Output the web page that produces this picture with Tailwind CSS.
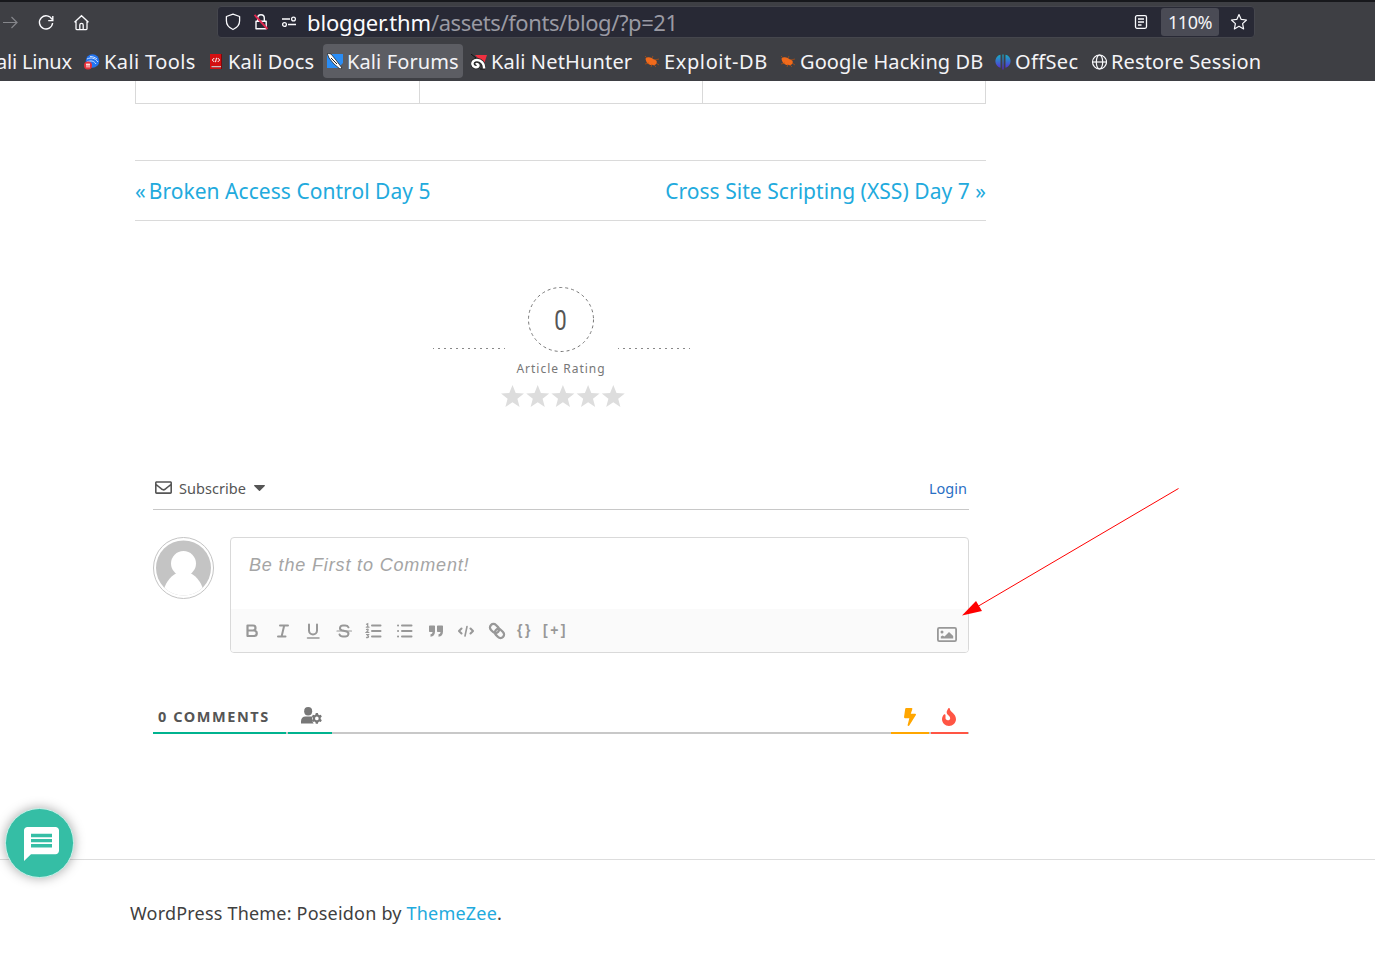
<!DOCTYPE html>
<html lang="en">
<head>
<meta charset="utf-8">
<title>Blog</title>
<script src="https://cdn.jsdelivr.net/npm/@tailwindcss/browser@4"></script>
</head>
<body class="w-[1375px] h-[965px] overflow-hidden bg-white font-['Noto_Sans',sans-serif] text-[#404040] relative flex flex-col">

<header class="h-[81px] shrink-0 bg-[#3e3f44] border-t-2 border-[#17181c] text-[#f4f4f7]">
  <div class="h-[41px] flex items-start pt-1">
    <svg class="w-[18px] h-[18px] mt-2 shrink-0" viewBox="0 0 18 18" fill="none" stroke="#85868b" stroke-width="1.2"><path d="M3 8.5h14M11.5 3l5.5 5.5-5.5 5.5"/></svg>
    <svg class="w-[18px] h-[18px] mt-2 ml-[19px] shrink-0" viewBox="0 0 18 18" fill="none" stroke="#fbfbfe" stroke-width="1.4"><path d="M15 5.5A6.6 6.6 0 1 0 15.6 9M15.8 2v4.6h-4.6"/></svg>
    <svg class="w-[18px] h-[18px] mt-2 ml-[18px] shrink-0" viewBox="0 0 18 18" fill="none" stroke="#fbfbfe" stroke-width="1.3"><path d="M1.5 8.2 8.5 1.7l7 6.5M3 7.5v7.3c0 .5.3.8.8.8h9.4c.5 0 .8-.3.8-.8V7.5M6.800 15.500v-4.500a1.700 1.700 0 0 1 3.400 0v4.500"/></svg>
    <div class="ml-[126px] w-[1038px] h-8 bg-[#282935] border border-[#45464d] rounded flex items-center">
      <svg class="w-4 h-[18px] ml-[7px] shrink-0" viewBox="0 0 16 18" fill="none" stroke="#fbfbfe" stroke-width="1.3"><path d="M8 1.2 14.600 3.500v4.300c0 4-2.600 7-6.600 8.700C4 14.800 1.400 11.800 1.400 7.800V3.500z" stroke-linejoin="round"/></svg>
      <svg class="w-4 h-[18px] ml-3 shrink-0" viewBox="0 0 16 18" fill="none" stroke="#fbfbfe" stroke-width="1.4"><path d="M4.700 8V5a3.300 3.300 0 0 1 6.600 0v3M3 8.200h10.200v7.600H3z" stroke-linejoin="round"/><path d="M1.500 1.800 14.500 16" stroke="#e22850" stroke-width="1.9"/></svg>
      <svg class="w-4 h-[18px] ml-3 shrink-0" viewBox="0 0 16 18" fill="none" stroke="#fbfbfe" stroke-width="1.3"><circle cx="12.500" cy="6" r="1.900"/><circle cx="3.500" cy="11.500" r="1.900"/><path d="M1 6h8M7 11.500h8"/></svg>
      <div class="ml-2.5 w-[824px] whitespace-nowrap text-[22px] leading-8 text-[#9a9aa3]"><span class="text-[#fbfbfe] tracking-[-0.15px]">blogger.thm</span><span class="tracking-[-0.42px]">/assets/fonts/blog/?p=21</span></div>
      <svg class="w-[14px] h-4 shrink-0 ml-[3px]" viewBox="0 0 14 16" fill="none" stroke="#fbfbfe" stroke-width="1.3"><rect x="1.500" y="1.700" width="11" height="12.600" rx="1.500"/><path d="M4 5h6M4 8h6M4 11h3.500"/></svg>
      <div class="ml-[13px] w-[58px] h-7 rounded-[3px] bg-[#4a4b55] text-[18px] leading-[29px] text-center whitespace-nowrap"><span class="tracking-[-0.5px]">110%</span></div>
      <svg class="w-[18px] h-[18px] ml-[11px] shrink-0" viewBox="0 0 18 18" fill="none" stroke="#fbfbfe" stroke-width="1.2" stroke-linejoin="round"><path d="m9 1.500 2.200 4.900 5.300.6-3.900 3.600 1 5.300L9 13.300l-4.600 2.600 1-5.300L1.500 7l5.300-.6z"/></svg>
    </div>
  </div>
  <nav class="h-[38px] flex items-start pt-px text-[20px] leading-[35px] whitespace-nowrap">
    <div class="w-[84px]"><span class="inline-block -ml-1 tracking-[-0.2px]">ali Linux</span></div>
    <div class="w-[125px] flex items-center">
      <svg class="w-4 h-4 mr-1" viewBox="0 0 16 16"><circle cx="8.500" cy="7" r="6.800" fill="#2374f0"/><path d="M3 5c4-2 8-1 11 3M3 8c4-2 7-1 9 2M6 2.500c3 0 5 1 7 2.500" stroke="#cfe2ff" fill="none"/><circle cx="4" cy="11.500" r="4" fill="#e8303a"/><path d="M2 10.200h4M3 10v3.500M5 10v3.500" stroke="#fff" fill="none"/></svg><span class="tracking-[0.4px]">Kali Tools</span></div>
    <div class="w-[114px] flex items-center">
      <svg class="w-4 h-4 mr-[3px]" viewBox="0 0 16 16"><path d="M1 0h12v12H2.500v1.200H13V15H1z" fill="#d40f12"/><path d="M2.500 12.200H12v1H2.500z" fill="#f7dada"/><path d="M12.500 0v15" stroke="#7a0a0c"/><path d="M5.300 4 3.300 6l2 2M8.700 4l2 2-2 2M7.500 3.800 6.500 8.200" stroke="#fff" fill="none"/></svg><span class="tracking-[0.15px]">Kali Docs</span></div>
    <div class="w-[140px] mr-2 h-[34px] rounded bg-[#5c5d63] flex items-center pl-1">
      <svg class="w-4 h-4 mr-1" viewBox="0 0 16 16"><path d="M0 1h16v9l-5 5H0z" fill="#2a8df5"/><path d="M0 0 4 1l5 6 6 8-2 1-6-5-5-6z" fill="#fff" stroke="#222" stroke-width=".8"/><path d="M4 5l6 6" stroke="#222"/></svg><span class="tracking-[0.12px]">Kali Forums</span></div>
    <div class="w-[173px] flex items-center">
      <svg class="w-4 h-4 mr-1" viewBox="0 0 16 16"><path d="M4 1h12l-3 9-5-5z" fill="#f03040"/><path d="M0 0l5 4M9 15h5" stroke="#111"/><path d="M12.500 14c.5-5-2.500-8-6.500-8-3.500 0-5 2-4.500 4.500S5.500 14 7 12.500 6 9.500 5 10.500" fill="none" stroke="#222" stroke-width="4"/><path d="M13 14.500c.5-5-3-8.500-7-8.500-3.500 0-5 2-4.500 4.500S5.500 14 7 12.500 6 9.500 5 10.500" fill="none" stroke="#fff" stroke-width="2.500"/></svg><span class="tracking-[0.15px]">Kali NetHunter</span></div>
    <div class="w-[136px] flex items-center">
      <svg class="w-4 h-4 mr-1" viewBox="0 0 16 16"><path d="M1.500 4.500C4 2 8 3.500 10 5.500c2 0 3.500 2 2.500 4-1 1.500-2.500 2-4 1.500C5 11.500 2 9 1.500 4.500z" fill="#f06a1c"/><path d="M3 4 1 2M8 4l1-2M11 6l4-1M12 9l3 2M8 10l-1 3M5 9l-4 1M10 11l2 2" stroke="#b9500f" stroke-width=".7"/></svg><span class="tracking-[0.62px]">Exploit-DB</span></div>
    <div class="w-[215px] flex items-center">
      <svg class="w-4 h-4 mr-1" viewBox="0 0 16 16"><path d="M1.500 4.500C4 2 8 3.500 10 5.500c2 0 3.500 2 2.500 4-1 1.500-2.500 2-4 1.500C5 11.500 2 9 1.500 4.500z" fill="#f06a1c"/><path d="M3 4 1 2M8 4l1-2M11 6l4-1M12 9l3 2M8 10l-1 3M5 9l-4 1M10 11l2 2" stroke="#b9500f" stroke-width=".7"/></svg><span class="tracking-[0.1px]">Google Hacking DB</span></div>
    <div class="w-24 flex items-center">
      <svg class="w-4 h-4 mr-1" viewBox="0 0 16 16"><defs><linearGradient id="o" x1="0" y1="0" x2="0" y2="1"><stop stop-color="#16b1c4"/><stop offset="1" stop-color="#5c22d6"/></linearGradient></defs><path d="M5.500 .8v13C1.500 12.500 0 9 .5 6 1 3 3 1.200 5.500.8zM7.400.5h1.200V15.500H7.400zM10.500.8c2.500.5 4.500 2.200 5 5.200s-1 6.500-5 7.800z" fill="url(#o)"/></svg><span class="tracking-[0.35px]">OffSec</span></div>
    <div class="flex items-center">
      <svg class="w-4 h-4 mr-1" viewBox="0 0 16 16" fill="none" stroke="#fbfbfe" stroke-width="1.2"><circle cx="8.500" cy="8" r="7"/><ellipse cx="8.500" cy="8" rx="3.200" ry="7"/><path d="M1.500 8h14"/></svg><span class="tracking-[0.15px]">Restore Session</span></div>
  </nav>
</header>

<main class="ml-[135px] w-[851px] flex flex-col shrink-0">
  <div class="h-[23px] grid grid-cols-[285px_283px_283px] border-b border-[#d9d9d9]">
    <div class="border-x border-[#d9d9d9]"></div><div class="border-r border-[#d9d9d9]"></div><div class="border-r border-[#d9d9d9]"></div>
  </div>
  <nav class="mt-14 h-[61px] border-y border-[#dadada] pt-0.5 flex justify-between items-center text-[21px] text-[#22aadd] whitespace-nowrap">
    <span class="tracking-[0.04px]">«<span class="ml-[3px]">Broken Access Control Day 5</span></span><span class="tracking-[0.04px]">Cross Site Scripting (XSS) Day 7 »</span>
  </nav>

  <section class="mt-[66px] ml-px h-[122px] flex justify-center items-start">
    <svg class="w-[72px] h-[3px] mt-[60px]" viewBox="0 0 72 3"><path d="M0 1.500h72" stroke="#888" stroke-dasharray="2 4" stroke-dashoffset="1"/></svg>
    <div class="w-[113px] flex flex-col items-center whitespace-nowrap">
      <div class="size-[66px] relative grid place-items-center">
        <svg class="absolute inset-0 size-[66px]" viewBox="0 0 66 66" fill="none"><ellipse cx="33" cy="32.500" rx="32.500" ry="32" stroke="#777" stroke-dasharray="3 3"/></svg>
        <span class="font-['Roboto'] text-[27px] text-[#555] scale-x-[0.82] translate-y-px">0</span>
      </div>
      <div class="mt-[7px] text-[12px] leading-[18px] text-[#777] tracking-[1px]">Article Rating</div>
      <svg class="mt-[7px] ml-[3px] w-[124px] h-[23px] shrink-0" viewBox="0 0 124 23" fill="#ddd"><defs><path id="s" d="m11.500 0 3.200 8 8.300.5-6.600 5.200 2.200 8.300-7.100-4.700L4.400 22l2.200-8.300L0 8.500 8.300 8z"/></defs><use href="#s"/><use href="#s" x="25.200"/><use href="#s" x="50.400"/><use href="#s" x="75.600"/><use href="#s" x="100.800"/></svg>
    </div>
    <svg class="w-[72px] h-[3px] mt-[60px]" viewBox="0 0 72 3"><path d="M0 1.500h72" stroke="#888" stroke-dasharray="2 4" stroke-dashoffset="1"/></svg>
  </section>

  <section class="ml-[18px] w-[816px] mt-[60px]">
    <div class="h-[41px] border-b border-[#c8c8c8] flex items-center pl-0.5 pr-0.5 text-[14.500px] text-[#555] whitespace-nowrap">
      <svg class="w-[17px] h-[17px] -mt-[3px]" viewBox="0 0 512 512" fill="#555"><path d="M464 64H48C21.490 64 0 85.490 0 112v288c0 26.510 21.490 48 48 48h416c26.510 0 48-21.490 48-48V112c0-26.510-21.490-48-48-48zm0 48v40.805c-22.422 18.259-58.168 46.651-134.587 106.490-16.841 13.247-50.201 45.072-73.413 44.701-23.208.375-56.579-31.459-73.413-44.701C106.180 199.465 70.425 171.067 48 152.805V112h416zM48 400V214.398c22.914 18.251 55.409 43.862 104.938 82.646 21.857 17.205 60.134 55.186 103.062 54.955 42.717.231 80.509-37.199 103.053-54.947 49.528-38.783 82.032-64.401 104.947-82.653V400H48z"/></svg>
      <div class="ml-[7px] w-[75px] tracking-[0.04px]">Subscribe</div>
      <svg class="w-[11px] h-[6px] -mt-0.5" viewBox="0 0 11 6" fill="#555"><path d="M.7 0h9.600c.6 0 .9.600.5 1L6 5.700c-.3.300-.7.300-1 0L.2 1C-.2.600.1 0 .7 0z"/></svg>
      <span class="ml-auto text-[#2a6fc4]">Login</span>
    </div>
    <div class="mt-[27px] flex">
      <svg class="w-[61px] h-[62px] shrink-0" viewBox="0 0 61 62"><defs><clipPath id="a"><circle cx="30.500" cy="31" r="27.500"/></clipPath></defs><ellipse cx="30.500" cy="31" rx="30" ry="30.500" fill="#fff" stroke="#c4c4c4"/><g clip-path="url(#a)"><path d="M0 0h61v62H0z" fill="#c4c4c4"/><circle cx="30.500" cy="26.500" r="12.500" fill="#fff"/><path d="M10 56c1.500-9 6.500-16 13.500-20h14c7 4 12 11 13.500 20v6H10z" fill="#fff"/></g></svg>
      <div class="ml-4 w-[739px] h-[116px] border border-[#d9d9d9] rounded flex flex-col overflow-hidden">
        <div class="h-[71px] pl-[18px] pt-[13px] font-['Liberation_Sans'] italic text-[18px] leading-[28px] text-[#a5a5a5] tracking-[0.85px]">Be the First to Comment!</div>
        <div class="flex-1 bg-[#fafafa] flex items-start pt-[13px] pl-3">
          <svg class="w-[18px] h-[18px] mr-[13px]" viewBox="0 0 18 18" fill="none" stroke="#989898" stroke-width="2.2" stroke-linejoin="round"><path d="M4.500 3.500h5.500a2.500 2.500 0 0 1 0 5H4.500zM4.500 8.500h6.500a2.700 2.700 0 0 1 0 5.500H4.500z"/></svg>
          <svg class="w-[18px] h-[18px] mr-3" viewBox="0 0 18 18" fill="none" stroke="#989898" stroke-width="2" stroke-linecap="round"><path d="M6 3.500h8M4 14.500h7.500M10.200 3.500l-2.600 11"/></svg>
          <svg class="w-[18px] h-[18px] mr-[13px]" viewBox="0 0 18 18" fill="none" stroke="#989898" stroke-width="2" stroke-linecap="round"><path d="M5 2.500v6a4 4 0 0 0 8 0v-6"/><path d="M3.500 16h11.500" stroke-width="1.500"/></svg>
          <svg class="w-[18px] h-[18px] mr-3" viewBox="0 0 18 18" fill="none" stroke="#989898" stroke-width="2" stroke-linecap="round"><path d="M13.500 5.300C12.800 3.800 11.500 3.500 10 3.500H8C4.500 3.500 4 7.500 6.800 8.300l4.800 1.200c3 1 2.200 5-1.400 5H8c-1.800 0-3-.5-3.500-2"/><path d="M2 9h14.500" stroke-width="1.200"/></svg>
          <svg class="w-[18px] h-[18px] mr-[13px]" viewBox="0 0 18 18" fill="none" stroke="#989898" stroke-width="2" stroke-linecap="round"><path d="M7 3.500H15.500M7 9H15.500M7 14.500H15.500"/><path d="M1.500 2.300l1.200-.6v3.500M1.300 5.200h2.700M1.500 7.500c2-1 2.500.5 0 2.800h2.400M1.500 12.500h2l-1 1.300c1.800.2 1.200 2.400-1 1.800" stroke-width="1.200"/></svg>
          <svg class="w-[18px] h-[18px] mr-[13px]" viewBox="0 0 18 18" fill="none" stroke="#989898" stroke-width="2" stroke-linecap="round"><path d="M6 3.500H15.500M6 9H15.500M6 14.500H15.500M2 3.500h.1M2 9h.1M2 14.500h.1"/></svg>
          <svg class="w-[18px] h-[18px] mr-3" viewBox="0 0 18 18" fill="#989898"><path d="M3 3.500h4c.6 0 1 .4 1 1v5c0 3-1.500 5-4.500 5.300v-2.500c1.500-.3 2-1 2-2.300H3c-.6 0-1-.4-1-1V4.500c0-.6.4-1 1-1zM11 3.500h4c.6 0 1 .4 1 1v5c0 3-1.500 5-4.500 5.300v-2.500c1.500-.3 2-1 2-2.300H11c-.6 0-1-.4-1-1V4.500c0-.6.4-1 1-1z"/></svg>
          <svg class="w-[18px] h-[18px] mr-[13px]" viewBox="0 0 18 18" fill="none" stroke="#989898" stroke-width="2.100" stroke-linecap="round" stroke-linejoin="round"><path d="M4.500 6.500 2 9l2.500 2.500M13.500 6.500 16 9l-2.500 2.500"/><path d="m10 4.500-2 9.500" stroke-width="1.600"/></svg>
          <svg class="w-[18px] h-[18px] mr-[11px]" viewBox="0 0 18 18" fill="none" stroke="#989898" stroke-width="2.300"><g transform="rotate(45 9 9)"><rect x="0.500" y="5.500" width="10" height="7" rx="3.500"/><rect x="7.500" y="5.500" width="10" height="7" rx="3.500"/></g></svg>
          <span class="w-[26px] text-[14px] leading-[17px] font-bold text-[#989898] font-['Liberation_Sans'] tracking-[2.500px] whitespace-nowrap">{}</span>
          <span class="text-[14px] leading-[17px] font-bold text-[#989898] font-['Liberation_Sans'] tracking-[2.500px] whitespace-nowrap">[+]</span>
          <svg class="w-5 h-[15px] ml-auto mr-[11px] mt-[5px]" viewBox="0 0 20 15"><rect x=".9" y=".9" width="18.200" height="13.200" rx="1.300" fill="none" stroke="#989898" stroke-width="1.800"/><circle cx="5" cy="5" r="1.500" fill="#989898"/><path d="M3.800 11.500V9.500l1.700-1L7.500 9.500 12 5l4.200 4v2.500z" fill="#989898"/></svg>
        </div>
      </div>
    </div>
    <div class="mt-[47px] h-[34px] flex gap-0.5 bg-[linear-gradient(#c8c8c8,#c8c8c8)] bg-[length:100%_2px] bg-bottom bg-no-repeat">
      <div class="w-[133px] border-b-2 border-[#00b38f] pl-[5px] font-bold text-[14.500px] leading-[33px] tracking-[1.560px] text-[#555] whitespace-nowrap">0 COMMENTS</div>
      <div class="w-11 border-b-2 border-[#00b38f] pl-[13px] pt-[7px]">
        <svg class="w-[21px] h-[17px]" viewBox="0 0 22 17" preserveAspectRatio="none" fill="#777"><circle cx="7.500" cy="4.200" r="4.200"/><path d="M0 16.500v-2.200C0 11.500 2 9.500 4.700 9.500h5.500c.7 0 1.300.2 1.800.4-.3 2.200-.5 4.500 1.300 6.600z"/><path d="M15.500 6h2.200l.4 1.600 1 .6 1.600-.5 1.100 1.900-1.200 1.200v1.200l1.200 1.200-1.100 1.900-1.600-.5-1 .6-.4 1.600h-2.200l-.4-1.600-1-.6-1.600.5-1.100-1.900 1.200-1.200v-1.200l-1.200-1.200 1.100-1.900 1.600.5 1-.6zM16.600 9.500a1.900 1.900 0 1 0 0 3.800 1.900 1.900 0 0 0 0-3.800z" fill-rule="evenodd"/></svg>
      </div>
      <div class="ml-auto w-[38px] border-b-2 border-[#ffa600] flex justify-center pt-2"><svg class="w-3 h-[18px]" viewBox="0 0 320 512" preserveAspectRatio="none" fill="#ffa600"><path d="M296 160H180.600l42.600-129.800C227.200 15 215.700 0 200 0H56C44 0 33.800 8.900 32.200 20.800l-32 240C-1.700 275.200 9.500 288 24 288h118.700L96.600 482.500c-3.600 15.200 8 29.500 23.300 29.500 8.400 0 16.400-4.400 20.800-12l176-304c9.300-15.900-2.200-36-20.700-36z"/></svg></div>
      <div class="w-[37px] mr-px border-b-2 border-[#ff5544] flex justify-center pt-2 pr-px"><svg class="w-[14px] h-[18px]" viewBox="0 0 384 512" preserveAspectRatio="none" fill="#ff5544"><path d="M216 23.860c0-23.800-30.650-32.770-44.150-13.040C48 191.850 224 200 224 288c0 35.630-29.110 64.460-64.850 63.990-35.170-.45-63.150-29.770-63.150-64.940v-85.510c0-21.700-26.470-32.230-41.430-16.500C27.800 213.160 0 261.330 0 320c0 105.870 86.130 192 192 192s192-86.130 192-192c0-170.290-168-193-168-296.140z"/></svg></div>
    </div>
  </section>
</main>

<footer class="mt-[125px] border-t border-[#ddd] h-[106px] shrink-0 pl-[130px] pt-[35px] text-[18px] leading-9 tracking-[0.2px] whitespace-nowrap">WordPress Theme: Poseidon by <a class="text-[#22aadd]">ThemeZee</a>.</footer>

<div class="absolute left-[5px] top-[808px] w-[69px] h-[70px] rounded-full bg-[#35bea5] border border-[#c9f2ea] shadow-[0_0_12px_rgba(0,0,0,0.35)]">
  <svg class="ml-[18px] mt-[18px] w-[35px] h-[34px]" viewBox="2 2 20 20" preserveAspectRatio="none"><path fill="#fff" fill-rule="evenodd" d="M20 2H4c-1.100 0-2 .9-2 2v18l4-4h14c1.100 0 2-.9 2-2V4c0-1.100-.9-2-2-2zM6 6h12v2H6zM6 9h12v2H6zM6 12h12v2H6z"/></svg>
</div>
<svg class="absolute left-[950px] top-[480px] w-[240px] h-[145px]" viewBox="0 0 240 145"><path d="M228.500 8.500 20 131" stroke="#f00" fill="none"/><path d="M12 135.500 26 121l6 10z" fill="#f00"/></svg>
</body>
</html>
